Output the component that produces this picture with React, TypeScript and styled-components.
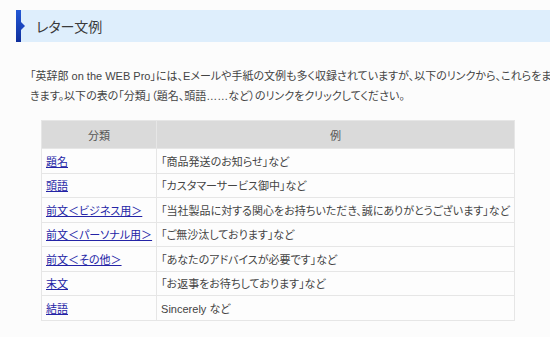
import styled, { createGlobalStyle } from "styled-components";

const GlobalStyle = createGlobalStyle`
  body {
    margin: 0;
    background: #fcfcfc;
    font-family: "Liberation Sans", "Noto Sans CJK JP", sans-serif;
    color: #333;
    overflow: hidden;
  }
`;

interface LetterRow {
  category: string;
  example: string;
}

const rows: LetterRow[] = [
  { category: "題名", example: "「商品発送のお知らせ」など" },
  { category: "頭語", example: "「カスタマーサービス御中」など" },
  {
    category: "前文＜ビジネス用＞",
    example: "「当社製品に対する関心をお持ちいただき、誠にありがとうございます」など",
  },
  { category: "前文＜パーソナル用＞", example: "「ご無沙汰しております」など" },
  { category: "前文＜その他＞", example: "「あなたのアドバイスが必要です」など" },
  { category: "末文", example: "「お返事をお待ちしております」など" },
  { category: "結語", example: "Sincerely など" },
];

function App() {
  return (
    <>
      <GlobalStyle />
      <Page>
        <Heading>
          <Marker />
          <HeadingText>レター文例</HeadingText>
        </Heading>
        <Intro>
          「英辞郎 on the WEB Pro」には、Eメールや手紙の文例も多く収録されていますが、以下のリンクから、これらをま
          <br />
          きます。以下の表の「分類」（題名、頭語……など）のリンクをクリックしてください。
        </Intro>
        <Table>
          <thead>
            <tr>
              <Th width={116}>分類</Th>
              <Th>例</Th>
            </tr>
          </thead>
          <tbody>
            {rows.map((row) => (
              <tr key={row.category}>
                <Td>
                  <Link href="#">{row.category}</Link>
                </Td>
                <Td>{row.example}</Td>
              </tr>
            ))}
          </tbody>
        </Table>
        <Rule />
      </Page>
    </>
  );
}

const Page = styled.div`
  width: 700px;
  padding-top: 10px;
`;

const Heading = styled.div`
  display: flex;
  align-items: center;
  height: 32px;
  margin-left: 16px;
  background: #deeefc;
`;

const Marker = styled.div`
  position: relative;
  width: 5px;
  height: 100%;
  background: linear-gradient(#2358d6, #0f2f9c);

  &::after {
    content: "";
    position: absolute;
    left: 5px;
    top: 12px;
    border-top: 4px solid transparent;
    border-bottom: 4px solid transparent;
    border-left: 4px solid #1a45c0;
  }
`;

const HeadingText = styled.h2`
  margin: 0 0 0 15px;
  font-size: 14px;
  font-weight: normal;
  color: #3a3a3a;
  font-feature-settings: "palt";
`;

const Intro = styled.p`
  margin: 24px 0 0 30px;
  font-size: 11px;
  line-height: 20px;
  color: #444;
  white-space: nowrap;
  font-feature-settings: "palt";
`;

const Table = styled.table`
  margin: 14px 0 0 41px;
  width: 472px;
  border-collapse: separate;
  border-spacing: 1px;
  background: #e6e6e6;
  font-size: 11px;
  font-feature-settings: "palt";
`;

const Th = styled.th<{ width?: number }>`
  width: ${(p) => (p.width ? `${p.width}px` : "auto")};
  height: 25px;
  background: #dadada;
  color: #555;
  font-weight: normal;
  text-align: center;
`;

const Td = styled.td`
  height: 23.5px;
  padding: 0 4px;
  background: #fdfdfd;
  color: #444;
  white-space: nowrap;
`;

const Link = styled.a`
  color: #2424a6;
  text-decoration: underline;
`;

const Rule = styled.div`
  width: 462px;
  margin: 16px 0 0 30px;
  border-top: 1px solid #ececec;
`;

export default App;
